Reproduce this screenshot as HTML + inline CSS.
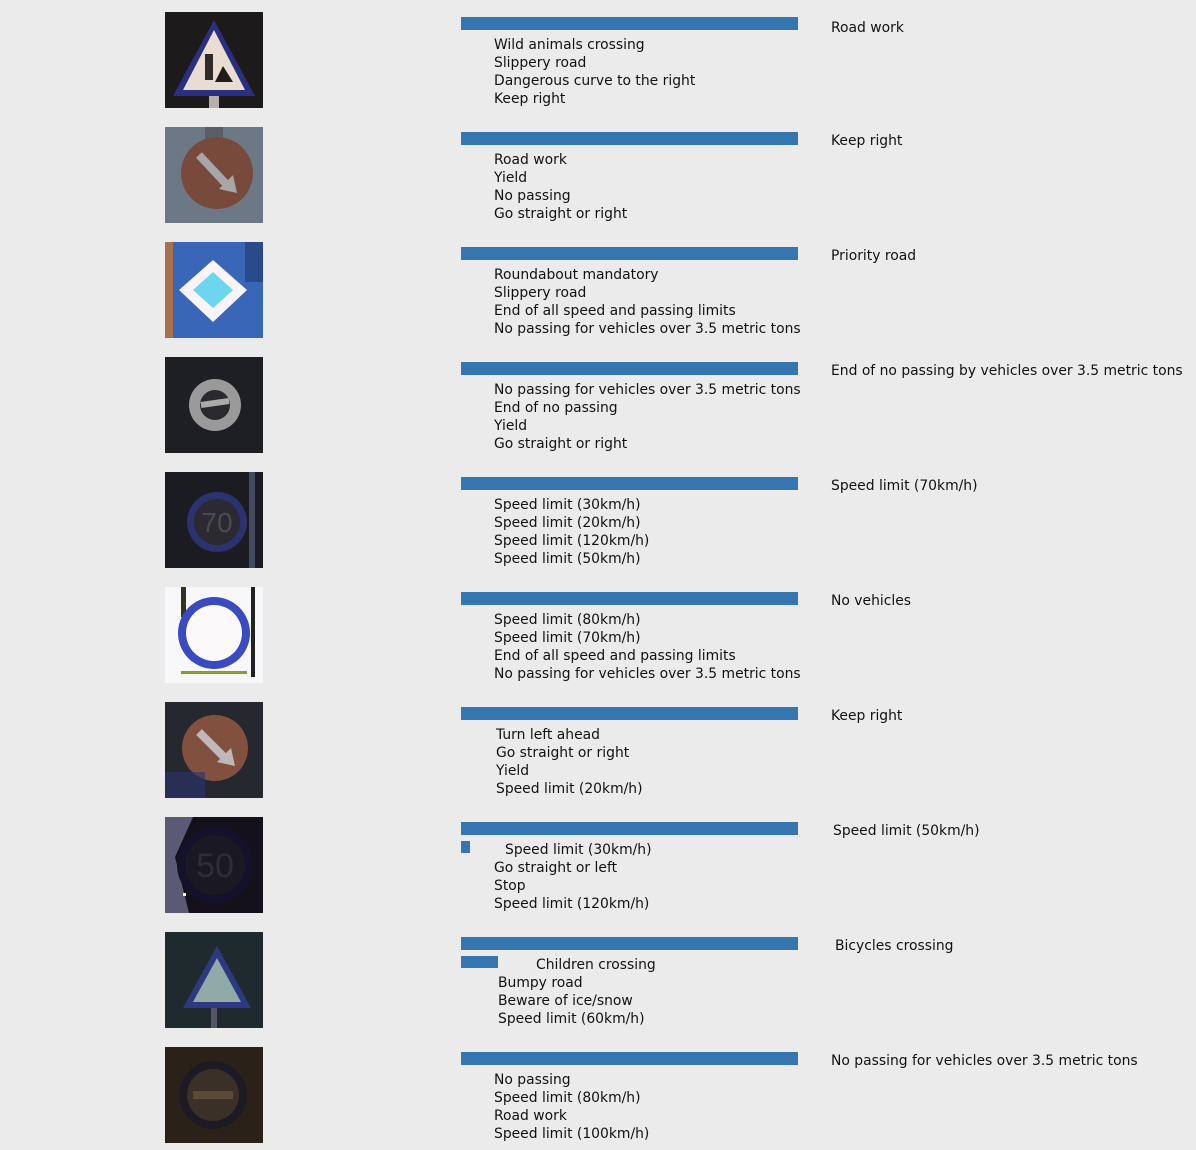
<!DOCTYPE html>
<html><head><meta charset="utf-8"><style>
body{margin:0;width:1196px;height:1150px;background:#ebebeb;position:relative;overflow:hidden;font-family:"DejaVu Sans","Liberation Sans",sans-serif;font-size:13.9px;color:#111}
.img{position:absolute;left:165px;width:98px;height:96px}
.bar{position:absolute;background:#3575b0;height:13px}
.t{position:absolute;white-space:nowrap;line-height:18px;margin-top:1px}
</style></head><body>

<svg class="img" style="top:12px" viewBox="0 0 98 96"><rect width="98" height="96" fill="#1d1a1c"/><rect x="44" y="80" width="10" height="16" fill="#b8b0a8"/><polygon points="49,8 90,84 8,84" fill="#2a2f80"/><polygon points="49,18 80,78 18,78" fill="#e8ddd0"/><rect x="40" y="42" width="8" height="26" fill="#302a28"/><polygon points="50,70 58,54 68,70" fill="#201a18"/></svg>

<svg class="img" style="top:127px" viewBox="0 0 98 96"><rect width="98" height="96" fill="#6c7886"/><rect x="40" y="0" width="18" height="20" fill="#5a5e66"/><circle cx="52" cy="46" r="36" fill="#774a3c"/><path d="M34 28 L62 58" stroke="#a8a6a8" stroke-width="8"/><polygon points="54,62 72,66 68,48" fill="#a8a6a8"/></svg>

<svg class="img" style="top:242px" viewBox="0 0 98 96"><rect width="98" height="96" fill="#3a66b8"/><rect x="0" y="0" width="8" height="96" fill="#a87050"/><rect x="80" y="0" width="18" height="40" fill="#2a4a8a"/><polygon points="48,18 82,48 48,80 14,48" fill="#fbf4f8"/><polygon points="48,30 68,48 48,66 28,48" fill="#6cd6ee"/></svg>

<svg class="img" style="top:357px" viewBox="0 0 98 96"><rect width="98" height="96" fill="#1d1f23"/><circle cx="50" cy="48" r="26" fill="#9a9a9a"/><circle cx="50" cy="48" r="15" fill="#2a2a2e"/><path d="M36 48 L64 44" stroke="#aaa" stroke-width="6"/></svg>

<svg class="img" style="top:472px" viewBox="0 0 98 96"><rect width="98" height="96" fill="#1b1c22"/><rect x="84" y="0" width="6" height="96" fill="#444a60"/><circle cx="52" cy="50" r="30" fill="#2a3270"/><circle cx="52" cy="50" r="23" fill="#2a2a30"/><text x="52" y="60" text-anchor="middle" font-size="28" fill="#4a4a50" font-family="Liberation Sans">70</text></svg>

<svg class="img" style="top:587px" viewBox="0 0 98 96"><rect width="98" height="96" fill="#f8f8fa"/><rect x="16" y="0" width="5" height="30" fill="#332"/><rect x="86" y="0" width="4" height="90" fill="#222"/><circle cx="49" cy="46" r="36" fill="#3a4ac0"/><circle cx="49" cy="46" r="28" fill="#fbf9fa"/><rect x="16" y="84" width="66" height="3" fill="#8a9a30"/></svg>

<svg class="img" style="top:702px" viewBox="0 0 98 96"><rect width="98" height="96" fill="#262830"/><circle cx="50" cy="46" r="33" fill="#82503e"/><path d="M34 30 L60 56" stroke="#c0b8b8" stroke-width="8"/><polygon points="52,60 70,64 66,46" fill="#c0b8b8"/><rect x="0" y="70" width="40" height="26" fill="#2a3270" opacity=".6"/></svg>

<svg class="img" style="top:817px" viewBox="0 0 98 96"><rect width="98" height="96" fill="#14111d"/><polygon points="0,0 28,0 10,40 24,96 0,96" fill="#5a5a74"/><circle cx="50" cy="48" r="38" fill="#14122a"/><circle cx="50" cy="48" r="30" fill="#1a1822"/><text x="50" y="60" text-anchor="middle" font-size="34" fill="#2e2c38" font-family="Liberation Sans">50</text><rect x="18" y="76" width="3" height="3" fill="#fff"/></svg>

<svg class="img" style="top:932px" viewBox="0 0 98 96"><rect width="98" height="96" fill="#1e2a2e"/><rect x="46" y="76" width="6" height="20" fill="#556"/><polygon points="52,14 86,76 18,76" fill="#2e3a80"/><polygon points="52,26 76,70 28,70" fill="#90aaa8"/></svg>

<svg class="img" style="top:1047px" viewBox="0 0 98 96"><rect width="98" height="96" fill="#2a2218"/><circle cx="48" cy="48" r="34" fill="#1e1a24"/><circle cx="48" cy="48" r="26" fill="#3a3028"/><rect x="28" y="44" width="40" height="8" fill="#5a4a38"/></svg>

<div class="bar" style="left:461px;top:17px;width:337px"></div>
<div class="bar" style="left:461px;top:132px;width:337px"></div>
<div class="bar" style="left:461px;top:247px;width:337px"></div>
<div class="bar" style="left:461px;top:362px;width:337px"></div>
<div class="bar" style="left:461px;top:477px;width:337px"></div>
<div class="bar" style="left:461px;top:592px;width:337px"></div>
<div class="bar" style="left:461px;top:707px;width:337px"></div>
<div class="bar" style="left:461px;top:822px;width:337px"></div>
<div class="bar" style="left:461px;top:841px;width:9px;height:12px"></div>
<div class="bar" style="left:461px;top:937px;width:337px"></div>
<div class="bar" style="left:461px;top:956px;width:37px;height:12px"></div>
<div class="bar" style="left:461px;top:1052px;width:337px"></div>

<div class="t" style="left:831px;top:18px">Road work</div>
<div class="t" style="left:831px;top:131px">Keep right</div>
<div class="t" style="left:831px;top:246px">Priority road</div>
<div class="t" style="left:831px;top:361px">End of no passing by vehicles over 3.5 metric tons</div>
<div class="t" style="left:831px;top:476px">Speed limit (70km/h)</div>
<div class="t" style="left:831px;top:591px">No vehicles</div>
<div class="t" style="left:831px;top:706px">Keep right</div>
<div class="t" style="left:833px;top:821px">Speed limit (50km/h)</div>
<div class="t" style="left:835px;top:936px">Bicycles crossing</div>
<div class="t" style="left:831px;top:1051px">No passing for vehicles over 3.5 metric tons</div>

<div class="t" style="left:494px;top:35px">Wild animals crossing<br>Slippery road<br>Dangerous curve to the right<br>Keep right</div>
<div class="t" style="left:494px;top:150px">Road work<br>Yield<br>No passing<br>Go straight or right</div>
<div class="t" style="left:494px;top:265px">Roundabout mandatory<br>Slippery road<br>End of all speed and passing limits<br>No passing for vehicles over 3.5 metric tons</div>
<div class="t" style="left:494px;top:380px">No passing for vehicles over 3.5 metric tons<br>End of no passing<br>Yield<br>Go straight or right</div>
<div class="t" style="left:494px;top:495px">Speed limit (30km/h)<br>Speed limit (20km/h)<br>Speed limit (120km/h)<br>Speed limit (50km/h)</div>
<div class="t" style="left:494px;top:610px">Speed limit (80km/h)<br>Speed limit (70km/h)<br>End of all speed and passing limits<br>No passing for vehicles over 3.5 metric tons</div>
<div class="t" style="left:496px;top:725px">Turn left ahead<br>Go straight or right<br>Yield<br>Speed limit (20km/h)</div>
<div class="t" style="left:505px;top:840px">Speed limit (30km/h)</div>
<div class="t" style="left:494px;top:858px">Go straight or left<br>Stop<br>Speed limit (120km/h)</div>
<div class="t" style="left:536px;top:955px">Children crossing</div>
<div class="t" style="left:498px;top:973px">Bumpy road<br>Beware of ice/snow<br>Speed limit (60km/h)</div>
<div class="t" style="left:494px;top:1070px">No passing<br>Speed limit (80km/h)<br>Road work<br>Speed limit (100km/h)</div>
</body></html>
